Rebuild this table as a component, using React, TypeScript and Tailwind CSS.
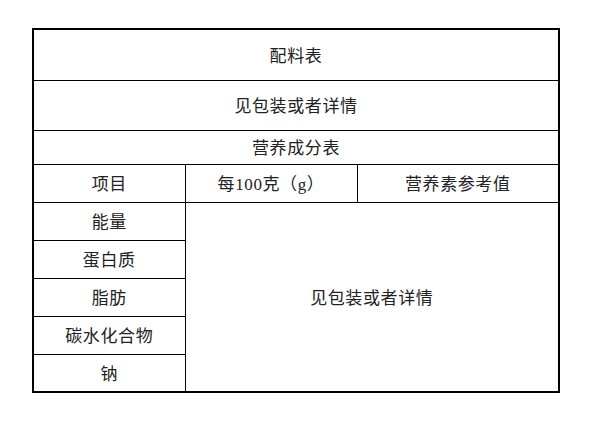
import React from "react";

const font = {
  fontFamily:
    '"Liberation Serif", "Noto Sans CJK SC", "Noto Sans CJK JP", sans-serif',
};

export default function App() {
  const nutrients = ["能量", "蛋白质", "脂肪", "碳水化合物", "钠"];
  const cell = "border border-black text-center pt-[4px] p-0";

  return (
    <div className="w-[607px] h-[425px] bg-white pt-[28px] pl-[32px]" style={font}>
      <table className="w-[526px] border-collapse border-2 border-black text-[17px] tracking-[0.6px] text-[#222] table-fixed">
        <colgroup>
          <col className="w-[152px]" />
          <col className="w-[172px]" />
          <col className="w-[202px]" />
        </colgroup>
        <tbody>
          <tr className="h-[51px]">
            <td colSpan={3} className={cell}>
              配料表
            </td>
          </tr>
          <tr className="h-[50px]">
            <td colSpan={3} className={cell}>
              见包装或者详情
            </td>
          </tr>
          <tr className="h-[34px]">
            <td colSpan={3} className={cell}>
              营养成分表
            </td>
          </tr>
          <tr className="h-[38px]">
            <td className={cell}>项目</td>
            <td className={cell}>每100克（g）</td>
            <td className={cell}>营养素参考值</td>
          </tr>
          {nutrients.map((n, i) => (
            <tr key={n} className="h-[38px]">
              <td className={cell}>{n}</td>
              {i === 0 && (
                <td rowSpan={5} colSpan={2} className={cell}>
                  见包装或者详情
                </td>
              )}
            </tr>
          ))}
        </tbody>
      </table>
    </div>
  );
}
